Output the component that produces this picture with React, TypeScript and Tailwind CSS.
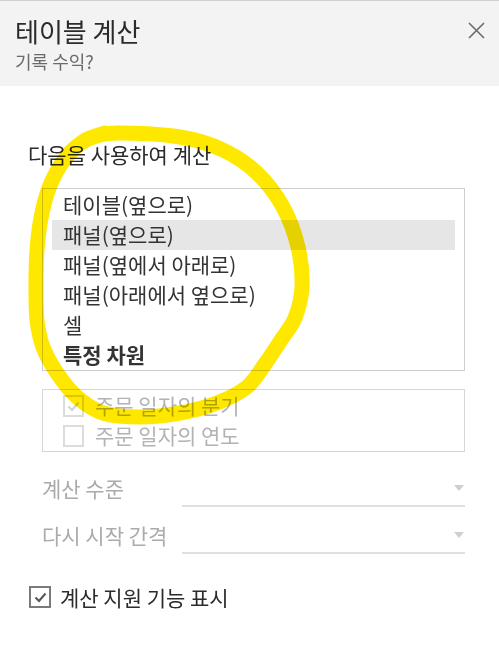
import React from "react";

const font = { fontFamily: '"Noto Sans CJK KR", "Noto Sans", sans-serif' };

// hand-drawn highlight loop, smoothed with catmull-rom
const loop: [number, number][] = [
  [68, 154], [88, 139], [118, 133], [180, 137], [223, 150], [257, 173],
  [283, 207], [298, 247], [302, 287], [295, 318], [281, 340], [265, 364],
  [247, 387], [217, 403], [180, 413], [140, 417], [103, 413], [77, 397],
  [57, 373], [43, 347], [37, 320], [36, 285], [37, 250], [41, 218],
  [49, 188], [64, 160], [84, 141], [105, 133],
];

function smooth(pts: [number, number][]) {
  let d = `M${pts[0][0]},${pts[0][1]}`;
  for (let i = 0; i < pts.length - 1; i++) {
    const p0 = pts[i - 1] || pts[i];
    const p1 = pts[i];
    const p2 = pts[i + 1];
    const p3 = pts[i + 2] || p2;
    const c1x = p1[0] + (p2[0] - p0[0]) / 6;
    const c1y = p1[1] + (p2[1] - p0[1]) / 6;
    const c2x = p2[0] - (p3[0] - p1[0]) / 6;
    const c2y = p2[1] - (p3[1] - p1[1]) / 6;
    d += ` C${c1x},${c1y} ${c2x},${c2y} ${p2[0]},${p2[1]}`;
  }
  return d;
}

const items = [
  "테이블(옆으로)",
  "패널(옆으로)",
  "패널(옆에서 아래로)",
  "패널(아래에서 옆으로)",
  "셀",
];

function Check({ className }: { className: string }) {
  return (
    <svg width="13" height="11" viewBox="0 0 13 11" className={className}>
      <path d="M1.5 5.5 L5 9 L11.5 1.5" fill="none" stroke="currentColor" strokeWidth="2" />
    </svg>
  );
}

function Select({ label }: { label: string }) {
  return (
    <div className="flex items-center h-[37px]">
      <div className="w-[140px] text-[21px] text-[#ababab]">{label}</div>
      <div className="flex-1 h-full border-b-2 border-[#e0e0e0] flex items-center justify-end pr-[1px]">
        <div className="w-0 h-0 border-l-[5px] border-r-[5px] border-t-[6px] border-l-transparent border-r-transparent border-t-[#cfcfcf]" />
      </div>
    </div>
  );
}

export default function App() {
  return (
    <div className="w-[499px] h-[649px] bg-white relative overflow-hidden text-[#333]" style={font}>
      {/* Header */}
      <header className="h-[86px] bg-[#f3f3f3] border-t border-[#cfcfcf] flex justify-between pl-[15px] pr-[14px] pt-[14px]">
        <div>
          <h1 className="text-[26px] leading-[32px] text-[#2b2b2b]">테이블 계산</h1>
          <p className="text-[18px] leading-[26px] text-[#6b6b6b] mt-[1px]">기록 수익?</p>
        </div>
        <svg width="17" height="17" viewBox="0 0 17 17" className="mt-[7px] text-[#6b6b6b]">
          <path d="M1 1 L16 16 M16 1 L1 16" stroke="currentColor" strokeWidth="1.6" />
        </svg>
      </header>

      <main className="px-[42px] pr-[34px]">
        <div className="-ml-[14px] mt-[54px] text-[21px] leading-[28px] text-[#2b2b2b]">다음을 사용하여 계산</div>

        {/* Compute using list */}
        <div className="mt-[20px] border border-[#cfcfcf] px-[9px] pt-[1px]">
          {items.map((t, i) => (
            <div
              key={t}
              className={`h-[30px] flex items-center pl-[11px] text-[21px] ${i === 1 ? "bg-[#e6e6e6]" : ""}`}
            >
              {t}
            </div>
          ))}
          <div className="h-[30px] flex items-center pl-[11px] text-[21px] font-bold">특정 차원</div>
        </div>

        {/* Dimension checkboxes (disabled) */}
        <div className="mt-[18px] border border-[#d6d6d6] pt-[1px] pl-[20px]">
          {[
            { t: "주문 일자의 분기", on: true },
            { t: "주문 일자의 연도", on: false },
          ].map((c) => (
            <div key={c.t} className="h-[30px] flex items-center gap-[11px]">
              <div className="w-[21px] h-[22px] border-2 border-[#dcdcdc] flex items-center justify-center">
                {c.on && <Check className="text-[#d2d2d2]" />}
              </div>
              <span className="text-[21px] text-[#b3b3b3]">{c.t}</span>
            </div>
          ))}
        </div>

        {/* Level / restart */}
        <div className="mt-[18px] flex flex-col gap-[10px]">
          <Select label="계산 수준" />
          <Select label="다시 시작 간격" />
        </div>

        <label className="-ml-[13px] mt-[32px] flex items-center gap-[9px]">
          <div className="w-[22px] h-[22px] border-2 border-[#7a7a7a] flex items-center justify-center">
            <Check className="text-[#555]" />
          </div>
          <span className="text-[21px] leading-[22px] text-[#2b2b2b]">계산 지원 기능 표시</span>
        </label>
      </main>

      {/* yellow marker annotation */}
      <svg className="absolute inset-0 pointer-events-none mix-blend-multiply" width="499" height="649">
        <path
          d={smooth(loop)}
          fill="none"
          stroke="#ffe800"
          strokeWidth="15"
          strokeLinecap="round"
          strokeLinejoin="round"
        />
      </svg>
    </div>
  );
}
